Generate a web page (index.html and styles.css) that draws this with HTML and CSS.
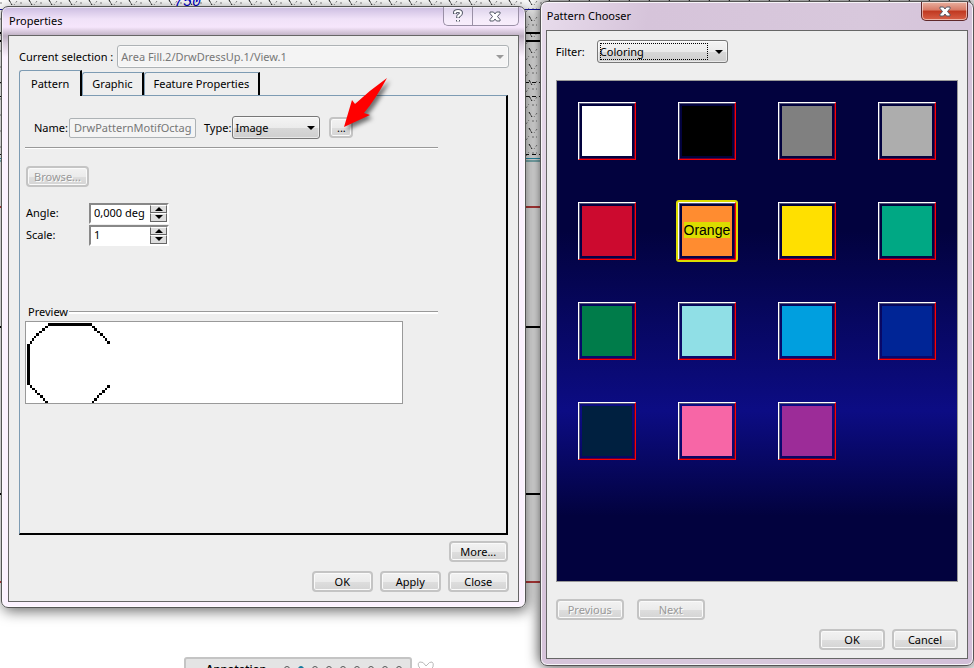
FILE: index.html
```html
<!DOCTYPE html>
<html lang="en">
<head>
<meta charset="utf-8">
<title>Properties</title>
<link rel="stylesheet" href="styles.css">
</head>
<body>
<div class="desktop">
  <svg class="drawing" width="100%" height="100%" aria-hidden="true">
    <defs>
      <pattern id="hatch" width="20" height="16" patternUnits="userSpaceOnUse">
        <path d="M9 0l3 5" stroke="#111" fill="none" stroke-dasharray="3 1"/>
        <path d="M0 3h2M17 1l-3 4M6 12l3-4M12 9h5" stroke="#888" fill="none" stroke-dasharray="2 2"/>
      </pattern>
    </defs>
    <rect width="100%" height="156" fill="url(#hatch)"/>
    <rect width="270" height="1" y="9" fill="#11a"/>
    <rect x="500" width="50" y="9" height="1" fill="#11a"/>
    <path d="M0 33h974M0 41h974" stroke="#000" stroke-width="2"/>
    <path d="M0 82.500h974M0 96.500h974M0 154.500h974" stroke="#111" stroke-dasharray="4 3"/>
    <path d="M0 158.500h974" stroke="#28a0c0"/>
    <path d="M0 161h974" stroke="#1a8890"/>
    <path d="M0 207h974M0 582h974" stroke="#c84040" stroke-width="2"/>
    <path d="M0 327h974M0 494h974" stroke="#000" stroke-width="2"/>
    <text x="174" y="6" class="dimension">750</text>
  </svg>

  <section class="window properties">
    <header class="titlebar">
      <h1>Properties</h1>
      <div class="caption-buttons">
        <button type="button" class="help" aria-label="Help"><svg width="12" height="14" viewBox="0 0 12 14"><path d="M3 5V3.500Q3 2 6 2T9 4Q9 5.500 7 6.500Q6 7 6 9M6 11v1.500" fill="none" stroke="#555a68" stroke-width="4"/><path d="M3 4.500V3.500Q3 2 6 2T9 4Q9 5.500 7 6.500Q6 7 6 8.500M6 11v1.500" fill="none" stroke="#fff" stroke-width="2"/></svg></button>
        <button type="button" class="dismiss" aria-label="Close window"><svg width="12" height="11" viewBox="0 0 12 11"><path d="M1 1h3.500L6 3 7.500 1H11v1.500L8.500 5.500 11 8.500V10H7.500L6 8 4.500 10H1V8.500L3.500 5.500 1 2.500z" fill="#fff" stroke="#555a68"/></svg></button>
      </div>
    </header>
    <form class="client">
      <div class="selection">
        <label for="selection">Current selection :</label>
        <select id="selection" class="combo" disabled><option>Area Fill.2/DrwDressUp.1/View.1</option></select>
      </div>
      <div class="tabs" role="tablist">
        <button type="button" role="tab" class="tab active" aria-selected="true">Pattern</button>
        <button type="button" role="tab" class="tab">Graphic</button>
        <button type="button" role="tab" class="tab">Feature Properties</button>
      </div>
      <div class="panel" role="tabpanel">
        <div class="type-row">
          <label for="name">Name:</label>
          <input id="name" class="name" type="text" value="DrwPatternMotifOctag" disabled>
          <label for="type" class="type-label">Type:</label>
          <select id="type" class="combo type"><option>Image</option></select>
          <button type="button" class="push dots">...</button>
        </div>
        <button type="button" class="push browse" disabled>Browse...</button>
        <div class="number-row">
          <label for="angle">Angle:</label>
          <div class="spinner">
            <input id="angle" type="text" value="0,000 deg">
            <div class="steps"><button type="button" class="up" aria-label="Increase angle"></button><button type="button" class="down" aria-label="Decrease angle"></button></div>
          </div>
        </div>
        <div class="number-row">
          <label for="scale">Scale:</label>
          <div class="spinner">
            <input id="scale" type="text" value="1">
            <div class="steps"><button type="button" class="up" aria-label="Increase scale"></button><button type="button" class="down" aria-label="Decrease scale"></button></div>
          </div>
        </div>
        <h2 class="preview-title">Preview</h2>
        <div class="preview">
          <svg width="84" height="81" viewBox="0 0 84 81" shape-rendering="crispEdges"><path d="M22 1h44v3H22zM1 22h3v41H1z"/><path d="M19 4h3v2h-3zM16 6h3v3h-3zM13 9h3v2h-3zM10 11h3v3h-3zM8 14h2v2H8zM6 16h2v3H6zM4 19h2v3H4zM66 4h3v2h-3zM68 6h3v3h-3zM71 9h3v2h-3zM74 11h3v3h-3zM77 14h2v2h-2zM79 16h2v3h-2zM81 19h3v3h-3zM4 63h2v3H4zM6 66h3v2H6zM9 68h2v3H9zM11 71h3v2h-3zM14 73h3v3h-3zM17 76h2v3h-2zM19 79h3v3h-3zM81 63h3v3h-3zM79 66h2v2h-2zM76 68h3v3h-3zM73 71h3v2h-3zM71 73h2v3h-2zM68 76h3v3h-3zM66 79h2v3h-2z"/></svg>
        </div>
      </div>
      <div class="more-row"><button type="button" class="push">More...</button></div>
      <div class="actions">
        <button type="button" class="push">OK</button>
        <button type="button" class="push">Apply</button>
        <button type="button" class="push">Close</button>
      </div>
    </form>
    <svg class="pointer" width="62" height="62" viewBox="0 0 62 62" aria-hidden="true"><path d="M44 3Q27 15 12 29L9 25 1 52 27 40 21 38Q32 25 44 3z" fill="#f00"/></svg>
  </section>

  <section class="window chooser">
    <header class="titlebar">
      <h1>Pattern Chooser</h1>
      <button type="button" class="red-close" aria-label="Close chooser"><svg width="12" height="11" viewBox="0 0 12 11"><path d="M1 1h3.500L6 3 7.500 1H11v1.500L8.500 5.500 11 8.500V10H7.500L6 8 4.500 10H1V8.500L3.500 5.500 1 2.500z" fill="#fff" stroke="#555a68"/></svg></button>
    </header>
    <form class="client">
      <div class="filter">
        <label for="filter">Filter:</label>
        <div class="focus"><select id="filter" class="combo"><option>Coloring</option></select></div>
      </div>
      <div class="swatches">
        <button type="button" class="swatch white" aria-label="White"></button>
        <button type="button" class="swatch black" aria-label="Black"></button>
        <button type="button" class="swatch gray" aria-label="Gray"></button>
        <button type="button" class="swatch silver" aria-label="Light gray"></button>
        <button type="button" class="swatch red" aria-label="Red"></button>
        <button type="button" class="swatch orange"><span>Orange</span></button>
        <button type="button" class="swatch yellow" aria-label="Yellow"></button>
        <button type="button" class="swatch teal" aria-label="Teal"></button>
        <button type="button" class="swatch green" aria-label="Green"></button>
        <button type="button" class="swatch aqua" aria-label="Aqua"></button>
        <button type="button" class="swatch sky" aria-label="Sky blue"></button>
        <button type="button" class="swatch blue" aria-label="Blue"></button>
        <button type="button" class="swatch navy" aria-label="Navy"></button>
        <button type="button" class="swatch pink" aria-label="Pink"></button>
        <button type="button" class="swatch purple" aria-label="Purple"></button>
      </div>
      <div class="pager">
        <button type="button" class="push" disabled>Previous</button>
        <button type="button" class="push" disabled>Next</button>
      </div>
      <div class="actions">
        <button type="button" class="push">OK</button>
        <button type="button" class="push">Cancel</button>
      </div>
    </form>
  </section>

  <div class="toolbar">
    <span>Annotation</span>
    <i></i><i class="on"></i><i></i><i></i><i></i><i></i><i></i><i></i><i></i>
  </div>
  <svg class="heart" width="18" height="14" viewBox="0 0 18 14" aria-hidden="true"><path d="M9 5Q6 0 3 1T2 6L9 13 16 6Q17 2 15 1T9 5z" fill="#fff" stroke="#bbb"/></svg>
</div>
</body>
</html>
```
FILE: styles.css
```css
* { box-sizing: border-box; }

body {
  margin: 0;
  background: #fff;
  color: #000;
  font: 11px/16px "Noto Sans", "Open Sans", sans-serif;
}

button, input, select { font: inherit; color: inherit; margin: 0; }
h1, h2 { margin: 0; font: inherit; }

.desktop {
  position: relative;
  display: flex;
  align-items: flex-start;
  gap: 14px;
  min-height: 100vh;
  padding: 1px 0 0 1px;
  overflow: hidden;
}

.drawing { position: absolute; top: 0; left: 0; }
.dimension { font: italic 15px "Liberation Mono", monospace; fill: #00c; }

.window {
  position: relative;
  border: 1px solid #555;
  border-radius: 7px;
  min-width: 0;
}

.properties {
  flex: 525 1 0;
  margin-top: 5px;
  padding: 0 6px 5px;
  background: linear-gradient(#cbbce0, #f0e2f8 12px, #f6e6fc 20px, #bcaec0 29px, #d8ccdc 36px, #fcf2ff 50px, #fcf2ff);
  box-shadow: inset 0 0 0 1px #fff9, 2px 3px 14px #0009;
}

.chooser {
  flex: 434 1 0;
  padding: 0 5px 6px;
  background: linear-gradient(100deg, #e8dcec, #d6c4da 20%, #d8c8dc 60%, #d2bfd8);
  box-shadow: inset 0 0 0 1px #fffc, 0 0 14px #000c;
}

.titlebar { display: flex; justify-content: space-between; align-items: flex-start; height: 28px; }
.titlebar h1 { padding: 6px 0 0 1px; }

.caption-buttons { display: flex; }
.caption-buttons button {
  display: flex;
  justify-content: center;
  align-items: center;
  height: 19px;
  padding: 0;
  border: 1px solid #9a90a6;
  border-top: 0;
  background: #fff5;
}
.caption-buttons .help { width: 29px; border-right: 0; border-radius: 0 0 0 5px; }
.caption-buttons .dismiss { width: 47px; border-radius: 0 0 5px 0; }

.red-close {
  display: flex;
  justify-content: center;
  align-items: center;
  width: 47px;
  height: 19px;
  padding: 0;
  border: 1px solid #60282a;
  border-top: 0;
  border-radius: 0 0 5px 5px;
  background: linear-gradient(#e8b0a0, #d87a66 45%, #c03820 50%, #d86048);
  box-shadow: inset 0 0 0 1px #fff8;
}

.client { border: 1px solid #666; background: #eee; }
.properties .client { padding: 9px 10px; }
.chooser .client { padding: 9px 9px 8px; }

.combo {
  appearance: none;
  height: 23px;
  padding: 0 18px 0 2px;
  border: 1px solid #777;
  border-radius: 3px;
  background:
    url("data:image/svg+xml,%3Csvg xmlns='http://www.w3.org/2000/svg' width='8' height='4'%3E%3Cpath d='M0 0h8L4 4z'/%3E%3C/svg%3E") no-repeat right 4px center,
    linear-gradient(#f4f4f4, #ebebeb 50%, #d8d8d8 51%, #cfcfcf);
  box-shadow: inset 0 0 0 1px #fff8;
}
.combo:disabled {
  opacity: 1;
  padding-left: 3px;
  border-color: #adb2b5;
  color: #777;
  background:
    url("data:image/svg+xml,%3Csvg xmlns='http://www.w3.org/2000/svg' width='8' height='4'%3E%3Cpath fill='%23999' d='M0 0h8L4 4z'/%3E%3C/svg%3E") no-repeat right 4px center,
    #f4f4f4;
}

.selection { display: flex; align-items: center; gap: 4px; margin-right: -1px; }
.selection .combo { flex: 1; }

.tabs { display: flex; align-items: flex-end; margin-top: 2px; }
.tab {
  height: 23px;
  padding: 0 9px;
  border: 1px solid #7d9bb3;
  border-right: 2px solid #000;
  border-bottom: 0;
  border-radius: 3px 0 0 0;
  background: #eee;
}
.tab.active { position: relative; height: 26px; margin-bottom: -1px; padding: 0 11px; }

.panel {
  min-height: 440px;
  padding: 20px 68px 0 5px;
  border: 1px solid #7d9bb3;
  border-right: 2px solid #000;
  border-bottom: 2px solid #000;
}

.type-row {
  display: flex;
  align-items: center;
  padding: 0 0 8px 9px;
  border-bottom: 1px solid #999;
  box-shadow: 0 1px #fff;
}
.name {
  width: 127px;
  height: 20px;
  margin-left: 1px;
  padding: 0 0 0 4px;
  border: 1px solid #adb2b5;
  border-radius: 2px;
  background: #f4f4f4;
}
.name:disabled { color: #777; }
.type-label { margin: 0 1px 0 8px; }
.type { width: 88px; }

.push {
  width: 61px;
  height: 21px;
  padding: 0;
  border: 2px solid #c4c4c4;
  border-radius: 4px;
  background: linear-gradient(#f2f2f2, #ebebeb 50%, #dedede 51%, #d4d4d4);
  box-shadow: inset 0 0 0 1px #fafafa;
}
.push:disabled { color: #999; text-shadow: 1px 1px #fff; }
.dots { width: 24px; margin-left: 9px; }
.browse { display: block; width: 63px; margin: 18px 0 15px 1px; }

.number-row { display: flex; align-items: center; height: 22px; }
.number-row label { width: 64px; padding-left: 1px; }
.spinner {
  display: flex;
  width: 80px;
  height: 21px;
  border: 2px solid #888;
  border-right-color: #fff;
  border-bottom-color: #fff;
  background: #fff;
}
.spinner input { flex: 1; min-width: 0; padding: 0 3px; border: 0; background: none; }
.steps { display: flex; flex-direction: column; width: 17px; }
.steps button {
  flex: 1;
  display: grid;
  place-items: center;
  padding: 0;
  border: 1px solid #666;
  border-top-color: #fff;
  background: #ddd;
}
.steps button::before { content: ""; border: 4px solid transparent; border-top: 0; border-bottom-color: #000; }
.steps .down::before { border-top: 4px solid #000; border-bottom: 0; }

.preview-title { display: flex; align-items: center; gap: 1px; margin-top: 58px; padding-left: 3px; }
.preview-title::after { content: ""; flex: 1; height: 2px; border-top: 1px solid #999; background: #fff; }
.preview {
  height: 83px;
  margin: 1px 35px 0 0;
  border: 1px solid #999;
  background: #fff;
}
.preview svg { display: block; }

.more-row { display: flex; justify-content: flex-end; margin-top: 6px; }
.more-row .push { width: 59px; }
.actions { display: flex; justify-content: flex-end; gap: 7px; margin-top: 9px; }
.properties .actions { margin-right: -1px; }

.pointer { position: absolute; left: 341px; top: 68px; filter: drop-shadow(3px 3px 2px #0008); }

.filter { display: flex; align-items: center; gap: 12px; }
.focus { position: relative; width: 131px; }
.focus .combo { width: 100%; outline: 0; }
.focus::after {
  content: "";
  position: absolute;
  inset: 3px 20px 3px 3px;
  border: 1px dotted #000;
  pointer-events: none;
}

.swatches {
  display: grid;
  grid-template-columns: repeat(4, 100px);
  grid-auto-rows: 100px;
  justify-content: center;
  height: 502px;
  margin-top: 17px;
  border: 1px solid #999;
  background: linear-gradient(#02023e, #02023e 30%, #0c0c84 66%, #02023e 87%);
}
.swatch {
  place-self: center;
  width: 58px;
  height: 58px;
  padding: 3px;
  border-width: 1px;
  border-style: solid;
  border-color: #fff #f00 #f00 #fff;
  box-shadow: inset 1px 1px #55557a, inset -1px -1px #5a0038;
}
.white { background: #fff content-box; }
.black { background: #000 content-box; }
.gray { background: #808080 content-box; }
.silver { background: #adadad content-box; }
.red { background: #cc0a2f content-box; }
.orange { background: #ff8c30 content-box; outline: 2px solid #dcdc00; border-radius: 1px; }
.yellow { background: #ffe000 content-box; }
.teal { background: #00a884 content-box; }
.green { background: #007c4a content-box; }
.aqua { background: #90dfe6 content-box; }
.sky { background: #009fdf content-box; }
.blue { background: #002596 content-box; }
.navy { background: #002040 content-box; }
.pink { background: #f766a6 content-box; }
.purple { background: #9c2c98 content-box; }
.orange span { background: #dcdc00; font: 14px/13px "Liberation Sans", sans-serif; }

.pager { display: flex; gap: 13px; margin-top: 17px; }
.pager .push { width: 68px; }
.chooser .actions .push { width: 66px; }

.toolbar {
  position: absolute;
  left: 184px;
  top: 657px;
  display: flex;
  align-items: center;
  gap: 8px;
  height: 24px;
  width: 228px;
  padding: 0 8px 0 20px;
  border: 2px solid #c4c4c4;
  border-radius: 3px;
  background: #e4e4e4;
}
.toolbar span { flex: 1; font-weight: 600; }
.toolbar i { width: 6px; height: 6px; border: 1px solid #555; border-radius: 50%; }
.toolbar .on { background: #157a9c; border-color: #157a9c; }
.heart { position: absolute; left: 417px; top: 661px; }
```
